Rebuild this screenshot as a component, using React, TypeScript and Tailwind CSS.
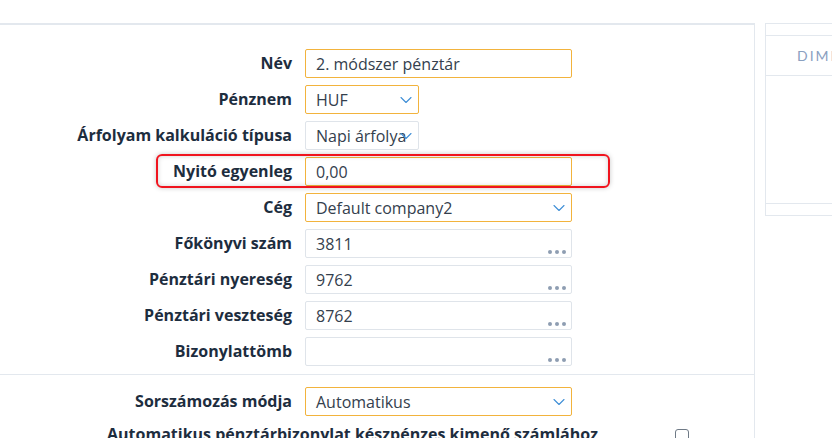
import { ChevronDown } from 'lucide-react';

const line = 'border-[#e3e8ee]';
const orange = 'border-[#f2b33d]';
const gray = 'border-[#dfe4ea]';

function Label({ children }: { children: React.ReactNode }) {
  return (
    <div className="w-[292px] shrink-0 text-right text-[16px] font-bold text-[#1d2d3e] leading-[29px] whitespace-nowrap">
      {children}
    </div>
  );
}

function TextInput({ value }: { value: string }) {
  return (
    <div className={`ml-[13px] w-[267px] h-[29px] rounded-[2px] border ${orange} bg-white px-[10px] flex items-center text-[16px] text-[#34404d]`}>
      {value}
    </div>
  );
}

function LookupInput({ value }: { value: string }) {
  return (
    <div className={`relative ml-[13px] w-[267px] h-[29px] rounded-[2px] border ${gray} bg-white px-[10px] flex items-center text-[16px] text-[#34404d]`}>
      {value}
      <div className="absolute right-[5px] bottom-[3px] flex gap-[3px]">
        <span className="w-[4px] h-[4px] rounded-full bg-[#8e9db2]" />
        <span className="w-[4px] h-[4px] rounded-full bg-[#8e9db2]" />
        <span className="w-[4px] h-[4px] rounded-full bg-[#8e9db2]" />
      </div>
    </div>
  );
}

function Select({ value }: { value: string }) {
  return (
    <div className={`relative ml-[13px] w-[267px] h-[29px] rounded-[2px] border ${orange} bg-white pl-[10px] flex items-center text-[16px] text-[#34404d]`}>
      <span className="whitespace-nowrap">{value}</span>
      <ChevronDown
        size={20}
        strokeWidth={1.3}
        className="absolute right-[2px] top-1/2 -translate-y-1/2 text-[#3f8fd6]"
      />
    </div>
  );
}

function NarrowSelect({ value, active }: { value: string; active: boolean }) {
  return (
    <div
      className={`relative ml-[13px] w-[114px] h-[29px] rounded-[2px] border ${active ? orange : gray} bg-white pl-[10px] flex items-center text-[16px] text-[#34404d]`}
    >
      <span className="w-[91px] whitespace-nowrap overflow-hidden">{value}</span>
      <ChevronDown
        size={20}
        strokeWidth={1.3}
        className="absolute right-[2px] top-1/2 -translate-y-1/2 text-[#3f8fd6]"
      />
    </div>
  );
}

export default function App() {
  return (
    <div className="w-[832px] h-[438px] overflow-hidden bg-white flex pt-[23px] font-['Open_Sans',sans-serif]">
      <div className={`w-[755px] shrink-0 border-t border-r ${line} flex flex-col`}>
        <div className={`h-[12px] border-b ${line}`} />
        <div className="pt-[24px] flex flex-col gap-[7px]">
          <div className="flex">
            <Label>Név</Label>
            <TextInput value="2. módszer pénztár" />
          </div>
          <div className="flex">
            <Label>Pénznem</Label>
            <NarrowSelect value="HUF" active />
          </div>
          <div className="flex">
            <Label>Árfolyam kalkuláció típusa</Label>
            <NarrowSelect value="Napi árfolyam" active={false} />
          </div>
          <div className="relative flex">
            <div className="absolute left-[156px] top-[-3px] w-[454px] h-[34px] rounded-[6px] border-2 border-[#f0141e] shadow-[0_0_5px_rgba(0,0,0,0.22),inset_0_0_5px_rgba(0,0,0,0.18)] pointer-events-none" />
            <Label>Nyitó egyenleg</Label>
            <TextInput value="0,00" />
          </div>
          <div className="flex">
            <Label>Cég</Label>
            <Select value="Default company2" />
          </div>
          <div className="flex">
            <Label>Főkönyvi szám</Label>
            <LookupInput value="3811" />
          </div>
          <div className="flex">
            <Label>Pénztári nyereség</Label>
            <LookupInput value="9762" />
          </div>
          <div className="flex">
            <Label>Pénztári veszteség</Label>
            <LookupInput value="8762" />
          </div>
          <div className="flex">
            <Label>Bizonylattömb</Label>
            <LookupInput value="" />
          </div>
        </div>
        <div className={`mt-[8px] border-t ${line} pt-[12px]`}>
          <div className="flex">
            <Label>Sorszámozás módja</Label>
            <Select value="Automatikus" />
          </div>
          <div className="flex items-start mt-[7px]">
            <div className="w-[598px] shrink-0 text-right text-[16px] font-bold text-[#1d2d3e] leading-[22px] whitespace-nowrap">
              Automatikus pénztárbizonylat készpénzes kimenő számlához
            </div>
            <div className="ml-[77px] mt-[6px] w-[14px] h-[14px] rounded-[3px] border border-[#6f7a86] bg-white" />
          </div>
        </div>
      </div>
      <div className={`ml-[10px] w-[120px] shrink-0 self-start border-t border-l border-b ${line}`}>
        <div className={`h-[12px] border-b ${line}`} />
        <div className={`h-[40px] border-b ${line} pl-[31px] flex items-center text-[14px] tracking-[2px] text-[#8aa0bf] font-['Lato',sans-serif]`}>
          DIMENZIÓK
        </div>
        <div className={`h-[128px] border-b ${line}`} />
        <div className="h-[11px]" />
      </div>
    </div>
  );
}
